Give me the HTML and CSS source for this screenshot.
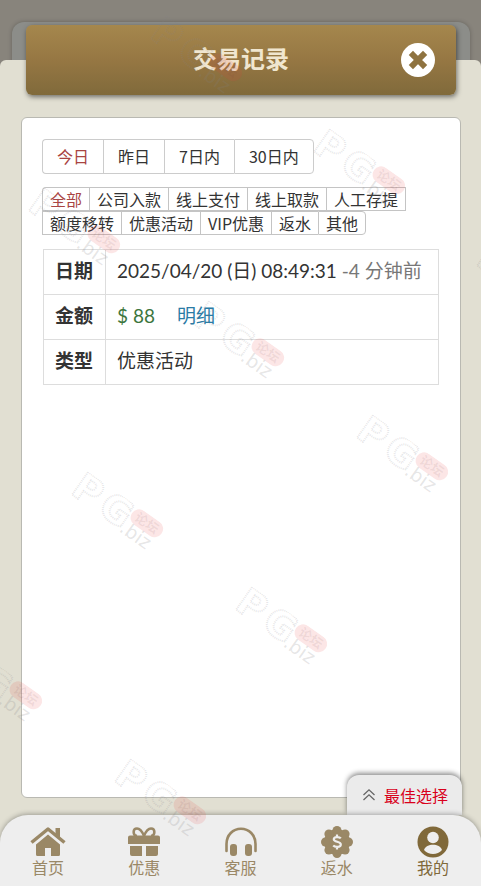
FILE: index.html
```html
<!DOCTYPE html>
<html lang="zh-CN">
<head>
<meta charset="utf-8">
<meta name="viewport" content="width=device-width, initial-scale=1">
<title>交易记录</title>
<link rel="stylesheet" href="styles.css">
</head>
<body>
<svg class="defs" aria-hidden="true">
  <symbol id="mark" viewBox="0 0 104 40">
    <g class="mark-dots">
      <text x="-2" y="28" class="mark-big">P</text>
      <text x="31" y="28" class="mark-big">G</text>
    </g>
    <text x="60" y="31" class="mark-small">.biz</text>
    <rect x="61" y="0" width="36" height="17" rx="8.5" class="mark-pill"/>
    <text x="66" y="13" class="mark-cn">论坛</text>
  </symbol>
</svg>
<div class="page">
  <div class="sheet">
    <header class="titlebar">
      <h1>交易记录</h1>
      <button class="close" type="button" aria-label="关闭">
        <svg viewBox="0 0 34 34"><circle cx="17" cy="17" r="17" fill="#fff"/><path d="M12 12l10 10M22 12l-10 10" stroke="#8f7340" stroke-width="6" stroke-linecap="square"/></svg>
      </button>
    </header>
    <main class="panel">
      <div class="range">
        <button type="button" class="active">今日</button><button type="button">昨日</button><button type="button">7日内</button><button type="button">30日内</button>
      </div>
      <div class="types">
        <button type="button" class="active">全部</button><button type="button">公司入款</button><button type="button">线上支付</button><button type="button">线上取款</button><button type="button" class="row-end">人工存提</button><button type="button">额度移转</button><button type="button">优惠活动</button><button type="button">VIP优惠</button><button type="button">返水</button><button type="button" class="last">其他</button>
      </div>
      <table class="record">
        <tbody>
          <tr><th scope="row">日期</th><td>2025/04/20 (日) 08:49:31 <span class="ago">-4 分钟前</span></td></tr>
          <tr><th scope="row">金额</th><td><span class="amount">$ 88</span><a class="detail" href="#">明细</a></td></tr>
          <tr><th scope="row">类型</th><td>优惠活动</td></tr>
        </tbody>
      </table>
    </main>
    <div class="dock">
      <button class="best" type="button">
        <svg viewBox="0 0 14 14"><path d="M1.500 7L7 1.800 12.500 7M1.500 12L7 6.800 12.500 12" fill="none" stroke="#666" stroke-width="1.300"/></svg>
        <span>最佳选择</span>
      </button>
      <nav class="nav">
        <a href="#">
          <svg viewBox="0 0 36 32"><path d="M1.500 16.500L18 3l16.500 13.500" fill="none" stroke="currentColor" stroke-width="3.500" stroke-linejoin="round"/><path d="M25.500 2H30v11l-4.500-4zM6 18.500L18 8.500l12 10V28.500q0 1.500-1.500 1.500H21v-8h-6v8H7.500Q6 30 6 28.500z" fill="currentColor"/></svg>
          <span>首页</span>
        </a>
        <a href="#">
          <svg viewBox="0 0 36 32"><path d="M18 10c-2-5-4-7.500-7-7.500-4.500 0-4.500 7 0 7.500M18 10c2-5 4-7.500 7-7.500 4.500 0 4.500 7 0 7.500" fill="none" stroke="currentColor" stroke-width="2.500"/><path d="M4 9.500h28q2 0 2 2V18H2v-6.500q0-2 2-2zM4 20h12v10H6q-2 0-2-2zM20 20h12v8q0 2-2 2H20z" fill="currentColor"/></svg>
          <span>优惠</span>
        </a>
        <a href="#">
          <svg viewBox="0 0 36 32"><path d="M3.500 25v-7C3.500 9 10 2.800 18 2.800S32.500 9 32.500 18v7" fill="none" stroke="currentColor" stroke-width="2.600" stroke-linecap="round"/><rect x="7" y="18" width="7" height="12" rx="3" fill="currentColor"/><rect x="22" y="18" width="7" height="12" rx="3" fill="currentColor"/></svg>
          <span>客服</span>
        </a>
        <a href="#">
          <svg viewBox="0 0 36 32"><g fill="currentColor"><circle cx="18" cy="16" r="13"/><circle cx="18" cy="4.500" r="4.500"/><circle cx="18" cy="27.500" r="4.500"/><circle cx="6.500" cy="16" r="4.500"/><circle cx="29.500" cy="16" r="4.500"/><circle cx="9.900" cy="7.900" r="4.500"/><circle cx="26.100" cy="7.900" r="4.500"/><circle cx="9.900" cy="24.100" r="4.500"/><circle cx="26.100" cy="24.100" r="4.500"/></g><path d="M21.800 12.300c-1.200-1.600-7-2-7 1 0 3.200 7 1.800 7 5.200 0 3.200-6 2.800-7.600 1M18 8.500v3M18 20.500v3" fill="none" stroke="#eee" stroke-width="2.200"/></svg>
          <span>返水</span>
        </a>
        <a href="#" class="current">
          <svg viewBox="0 0 36 32"><circle cx="18" cy="16" r="15.500" fill="currentColor"/><circle cx="18" cy="11.500" r="5.800" fill="#eee"/><path d="M9 24c2-7 16-7 18 0-4.500 5.300-13.500 5.300-18 0z" fill="#eee"/></svg>
          <span>我的</span>
        </a>
      </nav>
    </div>
  </div>
  <div class="marks" aria-hidden="true">
    <svg class="mark m1"><use href="#mark"/></svg>
    <svg class="mark m2"><use href="#mark"/></svg>
    <svg class="mark m3"><use href="#mark"/></svg>
    <svg class="mark m4"><use href="#mark"/></svg>
    <svg class="mark m5"><use href="#mark"/></svg>
    <svg class="mark m6"><use href="#mark"/></svg>
    <svg class="mark m7"><use href="#mark"/></svg>
    <svg class="mark m8"><use href="#mark"/></svg>
    <svg class="mark m9"><use href="#mark"/></svg>
    <svg class="mark m10"><use href="#mark"/></svg>
  </div>
</div>
</body>
</html>
```
FILE: styles.css
```css
* { box-sizing: border-box; }

body {
  margin: 0;
  background: #88847c;
  color: #333;
  font: 16px/24px "Noto Sans CJK SC", "Noto Sans", sans-serif;
}

button {
  font: inherit;
  color: inherit;
  margin: 0;
  cursor: pointer;
}

a { text-decoration: none; }

.defs { display: none; }

.page {
  position: relative;
  display: flex;
  flex-direction: column;
  min-height: 100vh;
  padding-top: 60px;
  overflow: hidden;
}

/* Edge of the card stacked behind the sheet */
.page::before {
  content: "";
  position: absolute;
  top: 22px;
  left: 12px;
  right: 11px;
  height: 60px;
  border-radius: 12px;
  background: #8c8d89;
  box-shadow: 0 0 4px rgba(0, 0, 0, .25);
}

.sheet {
  position: relative;
  flex: 1;
  display: flex;
  flex-direction: column;
  background: #e1dfd2;
  border-radius: 6px 6px 0 0;
}

.titlebar {
  position: relative;
  display: flex;
  align-items: center;
  justify-content: center;
  height: 70px;
  margin: -35px 25px 0 26px;
  padding-bottom: 4px;
  border-radius: 6px;
  background: linear-gradient(#a5874d, #967743 50%, #806a3b);
  box-shadow: 1px 2px 5px rgba(0, 0, 0, .5);
}

.titlebar h1 {
  margin: 0;
  font-size: 24px;
  line-height: 36px;
  color: #f0e6cf;
}

.close {
  position: absolute;
  right: 21px;
  top: 18px;
  width: 34px;
  height: 34px;
  padding: 0;
  border: 0;
  background: none;
}

.close svg { display: block; }

.panel {
  flex: 1;
  margin: 22px 20px 17px 21px;
  padding: 21px 20px;
  background: #fff;
  border: 1px solid #b9b9b2;
  border-radius: 6px;
}

.range { display: flex; }

.range button {
  height: 35px;
  padding: 0 14px 2px;
  border: 1px solid #ccc;
  border-right-width: 0;
  background: #fff;
  line-height: 32px;
}

.range button:first-child { border-radius: 4px 0 0 4px; }
.range button:last-child { border-right-width: 1px; border-radius: 0 4px 4px 0; }

.types {
  display: flex;
  flex-wrap: wrap;
  margin-top: 13px;
}

.types button {
  height: 24px;
  padding: 0 7px;
  border: 1px solid #c4c4c4;
  border-right-width: 0;
  background: #fff;
  line-height: 20px;
}

.types button:first-child { border-top-left-radius: 4px; }
.types .row-end { border-right-width: 1px; }
.types .last { border-right-width: 1px; border-radius: 0 4px 4px 0; }

.range .active,
.types .active { color: #a94442; }

.record {
  width: calc(100% - 2px);
  margin: 14px 1px 0;
  border-collapse: collapse;
  font-family: Lato, "Noto Sans CJK SC", sans-serif;
  font-size: 19px;
}

.record th,
.record td {
  height: 45px;
  padding: 0 11px 2px;
  border: 1px solid #ddd;
  text-align: left;
  white-space: nowrap;
}

.record th { width: 62px; }
.record td { padding-right: 0; }

.ago { color: #777; }
.amount { color: #3c763d; }
.detail { margin-left: 22px; color: #2a7ba5; }

.dock { position: relative; }

.best {
  position: absolute;
  right: 19px;
  bottom: 100%;
  display: flex;
  align-items: center;
  gap: 8px;
  height: 40px;
  padding: 0 14px 0 15px;
  border: 0;
  border-radius: 12px 12px 0 0;
  background: #ebebeb;
  box-shadow: 0 -2px 5px rgba(0, 0, 0, .45);
  color: #d9001b;
}

.best svg { width: 14px; height: 14px; }

.nav {
  position: relative;
  display: flex;
  height: 71px;
  padding-top: 11px;
  background: #eee;
  border-radius: 28px 28px 0 0;
  box-shadow: 0 -1px 5px rgba(0, 0, 0, .3);
}

.nav a {
  flex: 1;
  display: flex;
  flex-direction: column;
  align-items: center;
  color: #9a8866;
}

.nav a.current { color: #80693a; }
.nav svg { width: 36px; height: 32px; }
.nav span { line-height: 18px; }

/* Watermark layer */
.marks {
  position: absolute;
  inset: 0;
  overflow: hidden;
  pointer-events: none;
}

.mark {
  position: absolute;
  width: 104px;
  height: 40px;
  overflow: visible;
  transform: rotate(35deg);
  transform-origin: 0 0;
}

.mark-dots {
  fill: none;
  stroke: rgba(130, 130, 140, .2);
  stroke-width: 2;
  stroke-dasharray: 1 1;
}

.mark-big { font: bold 38px "DejaVu Sans", sans-serif; }
.mark-small { font: 19px "DejaVu Sans", sans-serif; fill: rgba(130, 130, 130, .2); }
.mark-pill { fill: rgba(235, 60, 60, .13); }
.mark-cn { font: bold 13px "Noto Sans CJK SC", sans-serif; fill: rgba(120, 70, 70, .1); }

.m1 { left: 166px; top: 15px; }
.m2 { left: 329px; top: 128px; }
.m3 { left: 44px; top: 187px; }
.m4 { left: 208px; top: 300px; }
.m5 { left: 372px; top: 414px; }
.m6 { left: 87px; top: 471px; }
.m7 { left: 251px; top: 586px; }
.m8 { left: 130px; top: 758px; }
.m9 { left: -34px; top: 643px; }
.m10 { left: 492px; top: 242px; }
```
